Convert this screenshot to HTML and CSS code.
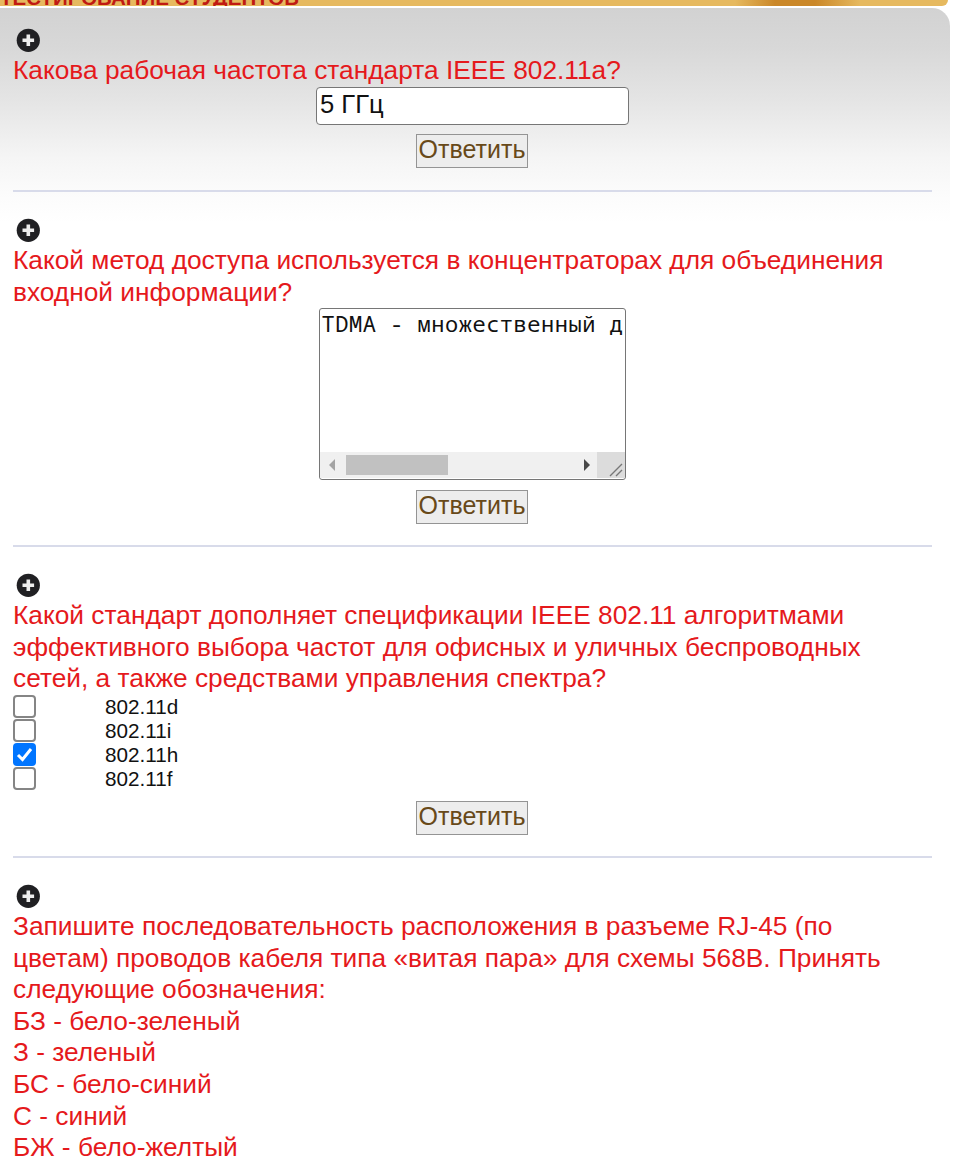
FILE: index.html
```html
<!DOCTYPE html>
<html lang="ru">
<head>
<meta charset="utf-8">
<title>Тестирование студентов</title>
<link rel="stylesheet" href="styles.css">
</head>
<body>
<svg class="defs" width="0" height="0"><symbol id="plus" viewBox="0 0 24 24"><circle cx="12.3" cy="12.3" r="11.6" fill="#202023"/><path d="M12.3 6.5v11.6M6.5 12.3h11.6" stroke="#eee" stroke-width="3.6"/></symbol></svg>
<header class="banner"><span class="banner-title">ТЕСТИРОВАНИЕ СТУДЕНТОВ</span></header>
<main class="panel">
  <section class="task task-first">
    <svg class="plus"><use href="#plus"/></svg>
    <p class="question">Какова рабочая частота стандарта IEEE 802.11a?</p>
    <div class="input">5 ГГц</div>
    <button class="answer">Ответить</button>
  </section>
  <section class="task task-area">
    <svg class="plus"><use href="#plus"/></svg>
    <p class="question">Какой метод доступа используется в концентраторах для объединения<br>входной информации?</p>
    <div class="area">
      <div class="area-text">TDMA - множественный д</div>
      <div class="scrollbar">
        <svg class="scroll-track" viewBox="0 0 277 26"><path d="M9 13l6-6v12z" fill="#a3a3a3"/><rect x="26" y="3" width="102" height="20" fill="#c1c1c1"/><path d="M270 13l-6-6v12z" fill="#484848"/></svg>
        <svg class="grip" viewBox="0 0 26 26"><path d="M12 24L24 12M18 24l6-6" stroke="#777" stroke-width="1.4"/></svg>
      </div>
    </div>
    <button class="answer">Ответить</button>
  </section>
  <section class="task task-options">
    <svg class="plus"><use href="#plus"/></svg>
    <p class="question">Какой стандарт дополняет спецификации IEEE 802.11 алгоритмами<br>эффективного выбора частот для офисных и уличных беспроводных<br>сетей, а также средствами управления спектра?</p>
    <div class="options">
      <label class="option"><span class="box"></span>802.11d</label>
      <label class="option"><span class="box"></span>802.11i</label>
      <label class="option"><span class="box checked"><svg viewBox="0 0 23 23"><path d="M5 12l4.5 4.5L18 6" fill="none" stroke="#fff" stroke-width="3"/></svg></span>802.11h</label>
      <label class="option"><span class="box"></span>802.11f</label>
    </div>
    <button class="answer">Ответить</button>
  </section>
  <section class="task task-last">
    <svg class="plus"><use href="#plus"/></svg>
    <p class="question">Запишите последовательность расположения в разъеме RJ-45 (по<br>цветам) проводов кабеля типа «витая пара» для схемы 568В. Принять<br>следующие обозначения:<br>БЗ - бело-зеленый<br>З - зеленый<br>БС - бело-синий<br>С - синий<br>БЖ - бело-желтый</p>
  </section>
</main>
</body>
</html>
```
FILE: styles.css
```css
* { box-sizing: border-box; }
html { overflow: hidden; }
body {
  margin: 0;
  height: 1159px;
  overflow: hidden;
  background: #fff;
  font-family: "Liberation Sans", Arial, sans-serif;
}
.defs { display: block; }
.banner {
  display: flex;
  align-items: flex-end;
  width: 948px;
  height: 6px;
  margin-bottom: 2px;
  overflow: hidden;
  border-radius: 0 0 18px 0;
  background: linear-gradient(90deg, #e6b95f 0, #e6b95f 735px, #ca8728 775px, #ca8728 815px, #e6b95f 860px);
}
.banner-title {
  color: #c01a12;
  font-size: 20.5px;
  font-weight: bold;
  line-height: 20px;
  margin-bottom: -2px;
  white-space: nowrap;
}
.panel {
  width: 950px;
  height: 1151px;
  padding: 0 18px 0 13px;
  border-radius: 0 18px 0 0;
  background: linear-gradient(#d2d2d2 0, #d8d8d8 40px, #e4e4e4 90px, #f5f5f5 150px, #fcfcfc 190px, #fff 215px);
}
.task {
  display: flex;
  flex-direction: column;
  align-items: center;
  padding-top: 26px;
  border-bottom: 2px solid #d8dbea;
}
.task-first { height: 184px; padding-top: 20px; }
.task-area { height: 355px; }
.task-options { height: 311px; }
.task-last { border: 0; }
.plus {
  flex: none;
  align-self: flex-start;
  width: 24px;
  height: 24px;
  margin: 0 0 3px 3px;
  overflow: visible;
}
.plus use { overflow: visible; }
.question {
  align-self: stretch;
  margin: 0;
  color: #e5191c;
  font-size: 26.3px;
  line-height: 31.6px;
  white-space: nowrap;
}
.input {
  flex: none;
  width: 313px;
  height: 38px;
  padding: 0 3px;
  border: 1.5px solid #767676;
  border-radius: 4px;
  background: #fff;
  color: #111;
  font-size: 25.6px;
  line-height: 32px;
}
.answer {
  flex: none;
  width: 112px;
  height: 34px;
  margin: 9px 0 0 -1px;
  padding: 0 0 3px;
  border: 1.5px solid #949494;
  background: #ededed;
  color: #684919;
  font-family: inherit;
  font-size: 25px;
  line-height: 27px;
  white-space: nowrap;
}
.task-area .answer, .task-options .answer { margin-top: 10px; }
.area {
  flex: none;
  display: flex;
  flex-direction: column;
  justify-content: space-between;
  width: 307px;
  height: 172px;
  margin-left: -1px;
  padding-bottom: 1px;
  overflow: hidden;
  border: 1.5px solid #767676;
  border-radius: 3px;
  background: #fff;
}
.area-text {
  padding: 1px 0 0 2px;
  color: #111;
  font-family: "Noto Sans Mono", "DejaVu Sans Mono", monospace;
  font-size: 22px;
  line-height: 26px;
  letter-spacing: 0.52px;
  white-space: pre;
}
.scrollbar { display: flex; height: 26px; }
.scroll-track { width: 277px; height: 26px; background: #f0f0f0; }
.grip { flex: 1; height: 26px; background: #dcdcdc; }
.options { align-self: stretch; }
.option {
  display: flex;
  align-items: center;
  gap: 69px;
  height: 24px;
  color: #111;
  font-size: 20.7px;
}
.box {
  width: 23px;
  height: 23px;
  border: 2px solid #858585;
  border-radius: 4px;
  background: #fff;
}
.box.checked { border: 0; background: #0075ff; }
.box svg { display: block; }
```
